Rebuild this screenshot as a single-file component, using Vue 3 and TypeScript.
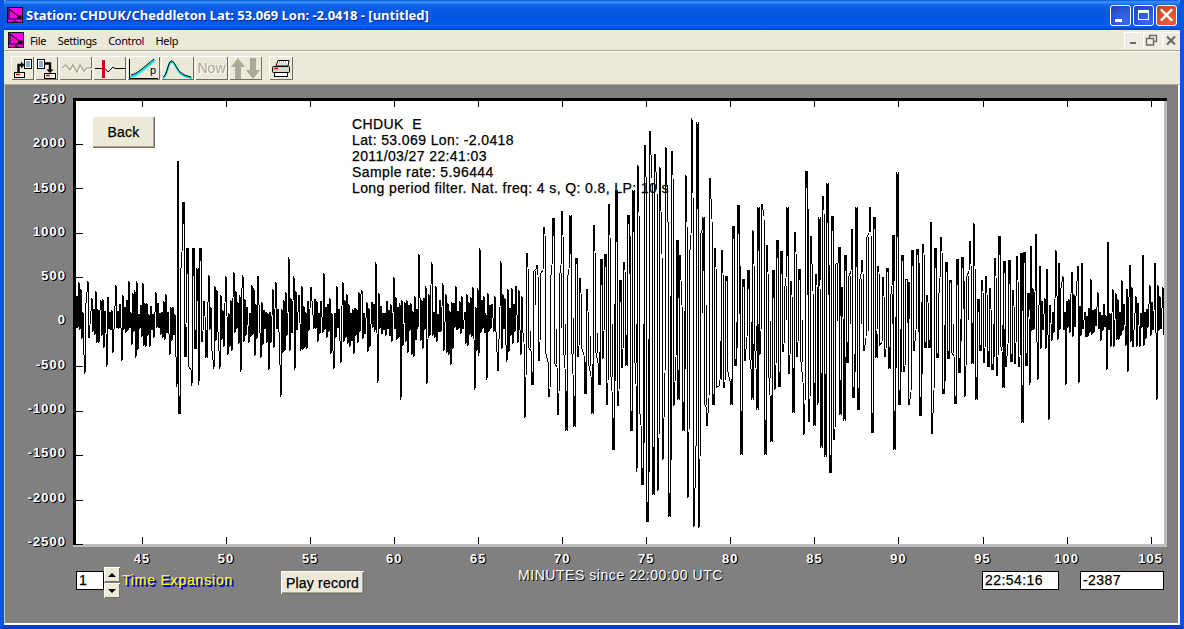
<script setup lang="ts">
const tops: number[][] = [[79,282],[88,281],[101,300],[116,285],[129,281],[137,281],[143,283],[156,292],[178,161],[183,202],[187,248],[193,248],[200,248],[209,275],[226,276],[234,272],[243,275],[252,285],[258,276],[276,282],[289,257],[294,276],[311,287],[324,273],[337,286],[343,282],[362,290],[376,262],[394,277],[419,254],[432,262],[443,283],[480,248],[501,261],[527,253],[537,265],[544,227],[553,218],[562,211],[570,215],[594,225],[609,204],[616,190],[628,215],[633,190],[638,165],[645,145],[650,131],[655,154],[660,167],[666,147],[672,151],[677,240],[686,175],[692,118],[697,122],[703,217],[710,178],[722,250],[733,226],[738,205],[748,270],[753,230],[758,207],[762,204],[767,245],[777,240],[787,207],[795,232],[806,171],[811,236],[819,217],[823,196],[827,183],[832,216],[839,247],[845,255],[852,229],[856,207],[862,260],[867,237],[870,207],[874,217],[883,277],[887,268],[893,235],[897,172],[902,255],[908,282],[912,250],[917,249],[923,244],[931,222],[935,248],[941,237],[946,262],[950,280],[957,259],[962,257],[970,241],[974,223],[986,276],[995,258],[999,236],[1004,261],[1009,260],[1017,256],[1021,253],[1024,252],[1031,246],[1036,234],[1040,266],[1047,269],[1056,250],[1059,263],[1063,276],[1072,272],[1078,266],[1082,263],[1091,279],[1098,292],[1108,242],[1113,289],[1122,280],[1130,265],[1143,255],[1150,285],[1155,263],[1163,287]]
const bottoms: number[][] = [[85,374],[107,367],[122,361],[136,358],[150,347],[170,355],[177,387],[179,414],[192,386],[199,385],[214,369],[220,369],[241,372],[261,358],[269,370],[281,397],[295,370],[334,369],[341,363],[362,359],[378,383],[401,400],[427,384],[451,365],[475,390],[487,380],[498,371],[507,362],[521,355],[525,418],[532,385],[549,397],[558,415],[566,431],[574,427],[585,394],[592,414],[599,385],[607,405],[613,450],[618,406],[631,431],[637,472],[642,485],[647,522],[653,495],[658,491],[663,460],[669,517],[678,400],[683,431],[688,498],[694,527],[699,528],[707,426],[713,405],[720,380],[731,405],[741,455],[752,400],[757,410],[765,455],[771,442],[779,387],[793,413],[804,435],[809,422],[814,426],[818,405],[821,448],[825,457],[830,473],[834,440],[840,415],[844,421],[853,398],[858,410],[867,400],[872,433],[883,395],[894,450],[899,405],[909,405],[920,416],[932,434],[943,394],[955,404],[965,397],[976,400],[997,376],[1003,388],[1022,423],[1030,385],[1038,380],[1049,420],[1066,385],[1079,383],[1107,370],[1128,372],[1150,423],[1157,400]]

const envPoints: number[][] = [[74,38],[175,38],[180,70],[205,55],[215,40],[520,40],[527,60],[620,85],[640,130],[700,130],[725,85],[830,90],[860,65],[1000,55],[1060,45],[1085,24],[1105,22],[1112,40],[1165,40]]

function envelope(x: number): number {
  for (let i = 1; i < envPoints.length; i++) {
    const [x1, y1] = envPoints[i]
    const [x0, y0] = envPoints[i - 1]
    if (x <= x1) return y0 + ((y1 - y0) * (x - x0)) / (x1 - x0)
  }
  return 40
}

function buildWave(): string {
  let seed = 20110327
  const rand = () => {
    seed = (seed * 1664525 + 1013904223) >>> 0
    return seed / 4294967296
  }
  const peaks = new Map<number, number>()
  for (const [x, y] of tops) peaks.set(x, y)
  for (const [x, y] of bottoms) if (!peaks.has(x)) peaks.set(x, y)
  const center = 321
  let sign = 1
  let lastX = 74
  const nodes: number[][] = [[74, center]]
  for (let x = 75; x < 1165; x++) {
    const e = envelope(x)
    const quiet = e < 50
    if (peaks.has(x)) {
      const y = peaks.get(x) as number
      sign = y < center ? 1 : -1
      nodes.push([x, y])
      lastX = x
      continue
    }
    if (peaks.has(x + 1) && !quiet) continue
    if (x - lastX < (quiet ? 1 : 2)) continue
    if (quiet && rand() < 0.08) continue
    sign = -sign
    const r = rand()
    const amp = e * (quiet ? 0.18 + 0.72 * r * Math.sqrt(r) : 0.35 + 0.55 * r)
    nodes.push([x, Math.round(center - sign * amp)])
    lastX = x
  }
  let path = `M${nodes[0][0]} ${nodes[0][1]}`
  for (let i = 1; i < nodes.length; i++) {
    const [x0, y0] = nodes[i - 1]
    const [x1, y1] = nodes[i]
    if (x1 - x0 >= 2 && envelope(x1) >= 50) {
      const f = 0.04 + 0.26 * rand()
      path += `L${x1 - 1} ${Math.round(y0 + (y1 - y0) * f)}`
    }
    path += `L${x1} ${y1}`
    // Some swings run two pixels wide, which is what gives the trace its weight.
    if (envelope(x1) >= 50 && rand() < 0.55) {
      const reach = y1 + (center - y1) * (0.5 + 0.7 * rand())
      path += `M${x1 + 1} ${y1}V${Math.round(reach)}M${x1} ${y1}`
    }
  }
  return path
}

const wavePath = buildWave()
const yLabels = ['2500', '2000', '1500', '1000', '500', '0', '-500', '-1000', '-1500', '-2000', '-2500']
const xLabels = ['45', '50', '55', '60', '65', '70', '75', '80', '85', '90', '95', '100', '105']
const xTicks = xLabels.map((_, i) => Math.round(142 + i * 84.05))
const yTicks = yLabels.map((_, i) => Math.round(99 + i * 44.5))
const infoLines = [
  'CHDUK  E',
  'Lat: 53.069 Lon: -2.0418',
  '2011/03/27 22:41:03',
  'Sample rate: 5.96444',
  'Long period filter. Nat. freq: 4 s, Q: 0.8, LP: 10 s',
]
const menus = ['File', 'Settings', 'Control', 'Help']
</script>

<template>
  <div class="window">
    <header class="titlebar">
      <svg class="appicon" viewBox="0 0 16 16">
        <rect x="0.5" y="0.5" width="15" height="15" fill="#ff00e6" stroke="#111" />
        <path d="M2 2 L2 12 L14 12 L14 9 L11 9 Z" fill="none" stroke="#111" stroke-width="1.2" />
        <path d="M11 9 L14 9 L14 12 L9 12 Z" fill="#111" />
        <path d="M8 12 V15 M5 15 H11" stroke="#111" />
      </svg>
      <span class="title">Station: CHDUK/Cheddleton Lat: 53.069 Lon: -2.0418 - [untitled]</span>
      <div class="winbtns">
        <div class="wb blue"><span class="min" /></div>
        <div class="wb blue"><span class="max" /></div>
        <div class="wb red">
          <svg viewBox="0 0 20 20" width="20" height="20"><path d="M5 5 L15 15 M15 5 L5 15" stroke="#fff" stroke-width="2.6" stroke-linecap="square" /></svg>
        </div>
      </div>
    </header>

    <nav class="menubar">
      <svg class="appicon menuicon" viewBox="0 0 16 16">
        <rect x="0.5" y="0.5" width="15" height="15" fill="#ff00e6" stroke="#111" />
        <path d="M2 2 L2 12 L14 12 L14 9 L11 9 Z" fill="none" stroke="#111" stroke-width="1.2" />
        <path d="M11 9 L14 9 L14 12 L9 12 Z" fill="#111" />
        <path d="M8 12 V15 M5 15 H11" stroke="#111" />
      </svg>
      <span v-for="m in menus" :key="m" class="menu">{{ m }}</span>
      <div class="mdi">
        <div class="mb"><svg viewBox="0 0 18 17" width="18" height="17"><path d="M6 11 H12" stroke="#6b6b62" stroke-width="2" /></svg></div>
        <div class="mb"><svg viewBox="0 0 18 17" width="18" height="17"><path d="M6.5 6.5 V3.5 H13.5 V9.5 H11 M3.5 6.5 H10.5 V13 H3.5 Z" fill="none" stroke="#6b6b62" stroke-width="1.4" /></svg></div>
        <div class="mb"><svg viewBox="0 0 18 17" width="18" height="17"><path d="M5 4.5 L13 12.5 M13 4.5 L5 12.5" stroke="#6b6b62" stroke-width="2.2" /></svg></div>
      </div>
    </nav>

    <div class="toolbar">
      <button class="tb w23">
        <svg viewBox="0 0 23 23" width="23" height="23">
          <rect x="3.5" y="15.5" width="10" height="5" fill="#f4f2e8" stroke="#000" />
          <path d="M5 17.5 H9" stroke="#e00000" stroke-width="1.4" />
          <path d="M7.5 15 V8 H10" fill="none" stroke="#000" stroke-width="2.4" />
          <path d="M10 4.5 L13.5 8 L10 11.5 Z" fill="#000" />
          <rect x="13.5" y="2.5" width="7" height="9" fill="#fff" stroke="#000" />
          <path d="M15 5 H19 M15 7 H19 M15 9 H19" stroke="#0060c0" />
        </svg>
      </button>
      <button class="tb w23">
        <svg viewBox="0 0 23 23" width="23" height="23">
          <rect x="2.5" y="2.5" width="7" height="9" fill="#fff" stroke="#000" />
          <path d="M4 5 H8 M4 7 H8 M4 9 H8" stroke="#0060c0" />
          <path d="M10 6.5 H15 V13" fill="none" stroke="#000" stroke-width="2.4" />
          <path d="M11.5 12.5 L15 16 L18.5 12.5 Z" fill="#000" />
          <rect x="9.5" y="16.5" width="11" height="5" fill="#f4f2e8" stroke="#000" />
          <path d="M11 18.5 H15" stroke="#e00000" stroke-width="1.4" />
        </svg>
      </button>
      <button class="tb w33">
        <svg viewBox="0 0 33 23" width="33" height="23">
          <path d="M3 11 L7 8 L11 13 L14 8 L18 15 L21 8 L25 14 L28 11 H32" fill="none" stroke="#fff" stroke-width="1.5" transform="translate(1 1)" />
          <path d="M3 11 L7 8 L11 13 L14 8 L18 15 L21 8 L25 14 L28 11 H32" fill="none" stroke="#aca899" stroke-width="1.5" />
        </svg>
      </button>
      <button class="tb w33">
        <svg viewBox="0 0 33 23" width="33" height="23">
          <path d="M2 11.5 H12 L15 15 L20 10 L22 11.5 H32" fill="none" stroke="#000" />
          <rect x="9" y="3" width="3" height="18" fill="#d00020" />
        </svg>
      </button>
      <button class="tb w33">
        <svg viewBox="0 0 33 23" width="33" height="23">
          <path d="M2.5 2 V21.5 H31" fill="none" stroke="#000" />
          <path d="M3 20 C10 19 17 12 28 3" fill="none" stroke="#00e6e6" stroke-width="2" />
          <path d="M4 18 C10 17 17 10 27 2" fill="none" stroke="#000" />
          <text x="23" y="17" class="ptext">p</text>
        </svg>
      </button>
      <button class="tb w33">
        <svg viewBox="0 0 33 23" width="33" height="23">
          <path d="M2 21 C6 20 7 6 10 5 C14 4 15 12 19 16 C22 19 27 20 31 21" fill="none" stroke="#00e6e6" stroke-width="2" />
          <path d="M2 20 C6 19 7 5 10 4 C13 3 15 11 19 15 C22 18 26 19 30 20" fill="none" stroke="#000" />
        </svg>
      </button>
      <button class="tb w33 now">Now</button>
      <button class="tb w33">
        <svg viewBox="0 0 33 23" width="33" height="23">
          <path d="M9 1 L2 10 H6 V22 H12 V10 H16 Z" fill="#aca899" />
          <path d="M24 22 L17 13 H21 V1 H27 V13 H31 Z" fill="#aca899" />
        </svg>
      </button>
      <button class="tb w24 last">
        <svg viewBox="0 0 24 23" width="24" height="23">
          <path d="M7 9 L9 3.5 H20 L19 9 Z" fill="#fff" stroke="#000" />
          <path d="M10 5 H18 M9.5 7 H18" stroke="#666" stroke-dasharray="1 1" />
          <rect x="3.5" y="9.5" width="17" height="6" rx="1" fill="#d8d4c8" stroke="#000" />
          <path d="M5 11.5 H9" stroke="#e00000" stroke-width="1.6" />
          <rect x="5.5" y="15.5" width="13" height="4" fill="#fff" stroke="#000" />
        </svg>
      </button>
    </div>

    <main class="client">
      <div class="chart">
        <div class="yaxis">
          <span v-for="l in yLabels" :key="l" class="lab">{{ l }}</span>
        </div>
        <div class="plot">
          <div class="info">
            <div v-for="(l, i) in infoLines" :key="i" class="line">{{ l }}</div>
          </div>
          <svg class="wave" viewBox="73 98 1094 449" width="1094" height="449">
            <rect x="1164" y="100" width="3" height="447" fill="#bdbdbd" />
            <rect x="73" y="544" width="1094" height="3" fill="#bdbdbd" />
            <rect x="73" y="98" width="1094" height="3" fill="#000" />
            <rect x="73" y="98" width="3" height="447" fill="#000" />
            <g fill="#000">
              <rect v-for="t in xTicks" :key="'t' + t" :x="t" y="101" width="1" height="6" />
              <rect v-for="t in xTicks" :key="'b' + t" :x="t" y="537" width="1" height="7" />
              <rect v-for="t in yTicks" :key="'l' + t" x="76" :y="t" width="7" height="1" />
            </g>
            <path :d="wavePath" fill="none" stroke="#000" stroke-width="1" shape-rendering="crispEdges" />
          </svg>
          <button class="raised back">Back</button>
        </div>
      </div>

      <div class="xaxis">
        <span v-for="l in xLabels" :key="l" class="lab xl">{{ l }}</span>
      </div>

      <div class="controls">
        <div class="spin">
          <div class="field spinval">1</div>
          <div class="spinbtns">
            <div class="sb"><i class="up" /></div>
            <div class="sb"><i class="down" /></div>
          </div>
        </div>
        <span class="expansion">Time Expansion</span>
        <button class="raised play">Play record</button>
        <span class="minutes">MINUTES since 22:00:00 UTC</span>
        <div class="field timebox">22:54:16</div>
        <div class="field valbox">-2387</div>
      </div>
    </main>
  </div>
</template>

<style>
html, body { margin: 0; padding: 0; background: #0a4fd8; }
</style>

<style scoped>
.window {
  width: 1184px;
  height: 629px;
  box-sizing: border-box;
  display: flex;
  flex-direction: column;
  overflow: hidden;
  background: #ece9d8;
  border-left: 4px solid #0a55e0;
  border-right: 4px solid #0a55e0;
  border-bottom: 4px solid #0a3fc0;
  font-family: "Liberation Sans", Arial, sans-serif;
}
.titlebar {
  height: 30px;
  margin: 0 -4px;
  flex: none;
  display: flex;
  align-items: center;
  padding: 0 7px;
  box-sizing: border-box;
  background: linear-gradient(to bottom, #0a58d6 0, #3a93ff 2px, #0f63e8 5px, #0458e0 14px, #0556e4 22px, #0a62f0 26px, #003fc0 30px);
  border-radius: 7px 7px 0 0;
}
.appicon { width: 16px; height: 16px; flex: none; }
.title {
  margin-left: 3px;
  color: #fff;
  font: 700 13px "Noto Sans", "Open Sans", sans-serif;
  text-shadow: 1px 1px 0 #0a2a90;
  white-space: nowrap;
}
.winbtns { margin-left: auto; display: flex; gap: 2px; margin-right: 0; }
.wb {
  width: 21px;
  height: 21px;
  box-sizing: border-box;
  border: 1px solid #fff;
  border-radius: 3px;
  display: flex;
  align-items: center;
  justify-content: center;
  position: relative;
}
.blue { background: radial-gradient(circle at 70% 75%, #3a6cf0 0, #2a55d8 55%, #1e3cb0 100%); }
.red { background: radial-gradient(circle at 70% 75%, #e8603a 0, #d8502a 60%, #b8401a 100%); }
.min { width: 7px; height: 3px; background: #fff; align-self: flex-end; margin: 0 5px 3px 0; }
.max { width: 11px; height: 10px; box-sizing: border-box; border: 1px solid #fff; border-top-width: 3px; }

.menubar {
  height: 20px;
  flex: none;
  display: flex;
  align-items: center;
  border-bottom: 1px solid #aca899;
  box-shadow: 0 1px 0 #fff;
  box-sizing: content-box;
  font: 11px "Noto Sans", sans-serif;
  color: #000;
}
.menuicon { margin: 0 0 0 4px; }
.menu { margin-left: 6px; margin-right: 5.5px; letter-spacing: -0.35px; }
.mdi { margin-left: auto; display: flex; gap: 1px; margin-right: 0; }
.mb {
  width: 18px;
  height: 17px;
  background: #f0eee2;
  border: 0;
  box-shadow: inset 1px 1px 0 #fff;
}
.toolbar {
  height: 33px;
  flex: none;
  margin-top: 1px;
  display: flex;
  align-items: center;
  padding-left: 7px;
  gap: 1px;
  box-sizing: border-box;
  border-bottom: 1px solid #aca899;
}
.tb {
  height: 24px;
  padding: 0;
  margin: 0;
  box-sizing: border-box;
  background: #ece9d8;
  border: 0;
  box-shadow: inset 1px 1px 0 #fff, inset -1px -1px 0 #716f64;
  display: flex;
  align-items: center;
  justify-content: center;
  overflow: hidden;
}
.tb.w23 { width: 23px; }
.tb.w33 { width: 33px; }
.tb.w24 { width: 24px; }
.tb.last { margin-left: 6px; }
.now {
  font: 14px "Liberation Sans", sans-serif;
  color: #aca899;
  text-shadow: 1px 1px 0 #fff;
}
.ptext { font: 11px "Liberation Sans", sans-serif; fill: #000; }

.client {
  flex: 1;
  min-height: 0;
  background: #808080;
  border-left: 1px solid #c8c6b8;
  border-bottom: 2px solid #fff;
  border-right: 2px solid #fff;
  display: flex;
  flex-direction: column;
  padding-top: 13px;
  box-sizing: border-box;
}
.chart { display: flex; height: 449px; flex: none; }
.yaxis {
  width: 68px;
  flex: none;
  height: 457px;
  margin-top: -6px;
  padding-right: 7px;
  box-sizing: border-box;
  display: flex;
  flex-direction: column;
  justify-content: space-between;
  align-items: flex-end;
}
.lab {
  font: 700 13px/14px "Liberation Sans", sans-serif;
  letter-spacing: 1px;
  color: #fff;
  text-shadow: 1px 1px 0 #000, 1px 0 0 #000;
  height: 14px;
}
.plot { position: relative; width: 1094px; height: 449px; background: #fff; flex: none; }
.wave { position: absolute; left: 0; top: 0; display: block; }
.info {
  position: absolute;
  left: 279px;
  top: 18px;
  font: 14px/16px "Liberation Sans", sans-serif;
  letter-spacing: 0.39px;
  -webkit-text-stroke: 0.25px #000;
  color: #000;
  white-space: pre;
}
.raised {
  background: #ece9d8;
  border: 0;
  padding: 0;
  color: #000;
  box-shadow: inset 1px 1px 0 #fff, inset -1px -1px 0 #716f64, inset -2px -2px 0 #aca899;
  font: 14px "Liberation Sans", sans-serif;
  letter-spacing: 0.2px;
  -webkit-text-stroke: 0.25px #000;
}
.back { position: absolute; left: 19px; top: 18px; width: 63px; height: 32px; }
.xaxis {
  display: flex;
  flex: none;
  padding-left: 95px;
  margin-top: 5px;
  height: 15px;
}
.xl { width: 84.05px; flex: none; text-align: center; }
.controls {
  display: flex;
  align-items: flex-start;
  flex: none;
  height: 34px;
  margin-top: 0;
}
.spin { display: flex; margin-left: 71px; flex: none; }
.field {
  background: #fff;
  border: 1px solid #000;
  box-sizing: border-box;
  font: 14px/17px "Liberation Sans", sans-serif;
  letter-spacing: 0.45px;
  -webkit-text-stroke: 0.25px #000;
  color: #000;
  padding-left: 2px;
  margin-top: 4px;
  height: 19px;
}
.spinval { width: 28px; }
.spinbtns { display: flex; flex-direction: column; gap: 1px; }
.sb {
  width: 16px;
  height: 15px;
  background: #ece9d8;
  box-shadow: inset 1px 1px 0 #fff, inset -1px -1px 0 #716f64;
  display: flex;
  align-items: center;
  justify-content: center;
}
.sb .up { border: 4px solid transparent; border-bottom-color: #000; border-top: 0; }
.sb .down { border: 4px solid transparent; border-top-color: #000; border-bottom: 0; }
.expansion {
  margin-left: 2px;
  margin-top: 5px;
  width: 159px;
  flex: none;
  font: 14px/16px "Liberation Sans", sans-serif;
  letter-spacing: 0.8px;
  -webkit-text-stroke: 0.2px #ffff00;
  color: #ffff00;
  text-shadow: 1px 1px 0 #0000d0, 2px 2px 0 #0000d0;
  white-space: nowrap;
}
.play { width: 83px; height: 23px; margin-top: 4px; flex: none; }
.minutes {
  margin-left: 154px;
  margin-top: 0;
  font: 14px/16px "Liberation Sans", sans-serif;
  letter-spacing: 0.55px;
  color: #fff;
  text-shadow: 1px 1px 0 #000;
  width: 464px;
  flex: none;
  white-space: nowrap;
}
.timebox { width: 77px; flex: none; }
.valbox { width: 84px; margin-left: 21px; flex: none; }
</style>
